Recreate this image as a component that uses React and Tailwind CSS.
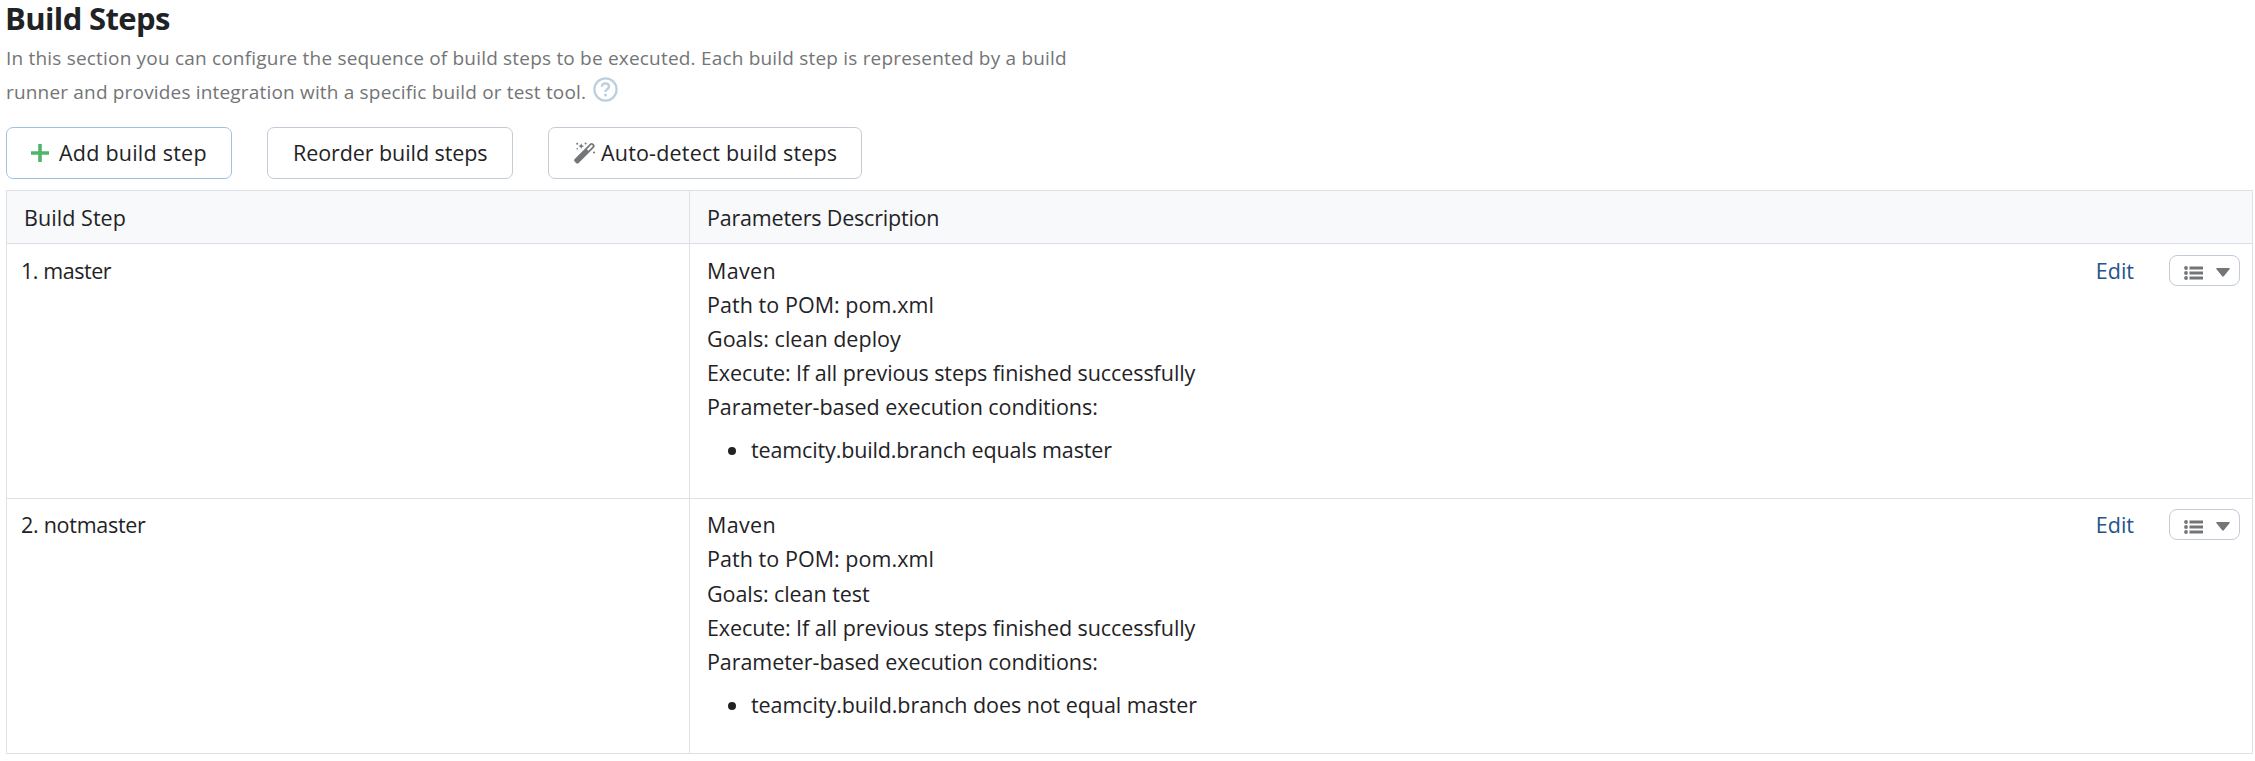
import React from "react";

const STEPS = [
  {
    name: ["1. master", "tracking-[-0.45px]"],
    pad: "pt-[10px] h-[255px] leading-[34.1px]",
    lines: [
      ["Maven", "tracking-[0.35px]"],
      ["Path to POM: pom.xml", "tracking-[0.05px]"],
      ["Goals: clean deploy", "tracking-[0.02px]"],
      ["Execute: If all previous steps finished successfully", "tracking-[-0.075px]"],
      ["Parameter-based execution conditions:", "tracking-[-0.06px]"],
    ],
    condition: ["teamcity.build.branch equals master", "tracking-[-0.14px]"],
  },
  {
    name: ["2. notmaster", "tracking-[-0.28px]"],
    pad: "pt-[9px] h-[254px] leading-[34.3px]",
    lines: [
      ["Maven", "tracking-[0.35px]"],
      ["Path to POM: pom.xml", "tracking-[0.05px]"],
      ["Goals: clean test", "tracking-[-0.06px]"],
      ["Execute: If all previous steps finished successfully", "tracking-[-0.075px]"],
      ["Parameter-based execution conditions:", "tracking-[-0.06px]"],
    ],
    condition: ["teamcity.build.branch does not equal master", "tracking-[-0.07px]"],
  },
];

function PlusIcon() {
  return (
    <svg className="h-[18px] w-[18px] shrink-0" viewBox="0 0 18 18" fill="#4fb56d">
      <path d="M7.200 0h3.600v7.200H18v3.600h-7.200V18H7.200v-7.200H0V7.200h7.200z" />
    </svg>
  );
}

function WandIcon() {
  return (
    <svg className="h-[22px] w-[22px] shrink-0" viewBox="0 0 22 22" fill="#737577">
      <path
        fillRule="evenodd"
        d="M.7 16.900 16.200 1.500q1.500-1.200 2.900 0l1 1q1.200 1.400 0 2.900L4.700 20.900q-1.400 1.100-2.700 0l-1.300-1.300q-1.100-1.300 0-2.700zM12.900 7.300l1.500 1.500 4.200-4.200q.5-.5 0-1l-.5-.5q-.5-.5-1 0z"
      />
      <path d="M7.200 1.200l.8 2.100 2.100.8-2.100.8-.8 2.100-.8-2.100-2.100-.8 2.100-.8z" />
      <circle cx="3.200" cy="1.800" r="1" />
      <circle cx="11.600" cy="1.600" r="1" />
      <circle cx="3.200" cy="6.800" r=".8" />
      <circle cx="20" cy="10.600" r="1" />
    </svg>
  );
}

function HelpIcon() {
  return (
    <svg className="h-[25px] w-[25px] shrink-0" viewBox="0 0 25 25" fill="none" stroke="#bccfdf">
      <circle cx="12.500" cy="12.500" r="11.100" strokeWidth="2.200" />
      <path d="M8.900 9.800q.2-3.400 3.600-3.400 3.400.1 3.500 3 0 1.500-1.900 2.800-1.600 1.100-1.600 2.700" strokeWidth="2.400" />
      <circle cx="12.500" cy="18" r="1.500" fill="#bccfdf" stroke="none" />
    </svg>
  );
}

function MenuButton() {
  return (
    <button className="flex h-[31px] w-[71px] items-center rounded-[8px] border border-[#c3ccd6] bg-white pl-[14px]">
      <svg className="mt-[5px] h-[14px] w-[19px]" viewBox="0 0 19 14" fill="#737577">
        <circle cx="2" cy="2" r="1.900" />
        <circle cx="2" cy="7" r="1.900" />
        <circle cx="2" cy="12" r="1.900" />
        <path d="M5.500.6H19v2.800H5.500zM5.500 5.600H19v2.800H5.500zM5.500 10.600H19v2.800H5.500z" />
      </svg>
      <svg className="ml-[13px] mt-[4px] h-[9px] w-[14px]" viewBox="0 0 14 9" fill="#737577">
        <path d="M1 0h12q1.300.3.500 1.300L7.800 8.300q-.8.800-1.600 0L.5 1.300Q-.3.300 1 0z" />
      </svg>
    </button>
  );
}

function StepRow({ step, last }) {
  return (
    <div className={`flex ${last ? "" : "border-b border-[#dfe1e5]"} ${step.pad}`}>
      <div className={`w-[682px] shrink-0 pl-[14px] ${step.name[1]}`}>{step.name[0]}</div>
      <div className="grow pl-[18px]">
        {step.lines.map(([text, tracking]) => (
          <div key={text} className={tracking}>{text}</div>
        ))}
        <div className="mt-[9px] flex items-center">
          <span className="ml-[21px] mr-[15px] h-[8px] w-[8px] rounded-full bg-[#1f2326]" />
          <span className={step.condition[1]}>{step.condition[0]}</span>
        </div>
      </div>
      <a className="mr-[35px] text-[#23558c]">Edit</a>
      <div className="mr-[12px] mt-px">
        <MenuButton />
      </div>
    </div>
  );
}

export default function App() {
  return (
    <div className="h-[761px] bg-white pl-[6px] font-['Open_Sans',sans-serif] text-[21.5px] text-[#1f2326]">
      <h1 className="-ml-px pt-px text-[31px] font-bold leading-[34px] tracking-[-0.62px]">Build Steps</h1>
      <div className="mt-[6px] text-[19px] leading-[34px] text-[#737577]">
        <div className="tracking-[0.194px]">
          In this section you can configure the sequence of build steps to be executed. Each build step is represented by a build
        </div>
        <div className="flex items-start">
          <span className="tracking-[0.176px]">runner and provides integration with a specific build or test tool.</span>
          <span className="ml-[7px] mt-[2px]"><HelpIcon /></span>
        </div>
      </div>
      <div className="mt-[18px] flex gap-[35px] leading-[34px]">
        <button className="flex h-[52px] w-[226px] items-center rounded-[7px] border border-[#9fc2e3] pl-[24px]">
          <PlusIcon />
          <span className="ml-[10px] whitespace-nowrap tracking-[0.23px]">Add build step</span>
        </button>
        <button className="flex h-[52px] w-[246px] items-center rounded-[7px] border border-[#c3ccd6] pl-[25px]">
          <span className="whitespace-nowrap tracking-[-0.08px]">Reorder build steps</span>
        </button>
        <button className="flex h-[52px] w-[314px] items-center rounded-[7px] border border-[#c3ccd6] pl-[25px]">
          <WandIcon />
          <span className="ml-[5px] whitespace-nowrap tracking-[0.18px]">Auto-detect build steps</span>
        </button>
      </div>
      <div className="mt-[11px] w-[2247px] border border-[#dfe1e5] bg-[linear-gradient(#dfe1e5,#dfe1e5)] bg-[length:1px_100%] bg-[position:682px_0] bg-no-repeat">
        <div className="flex h-[53px] items-center border-b border-[#dadee4]">
          <div className="h-full w-[682px] shrink-0 bg-[#f7f9fa] pl-[17px] leading-[54px] tracking-[0.06px]">Build Step</div>
          <div className="ml-px h-full grow bg-[#f7f9fa] pl-[17px] leading-[54px] tracking-[-0.2px]">Parameters Description</div>
        </div>
        {STEPS.map((step, i) => (
          <StepRow key={step.name[0]} step={step} last={i === STEPS.length - 1} />
        ))}
      </div>
    </div>
  );
}
